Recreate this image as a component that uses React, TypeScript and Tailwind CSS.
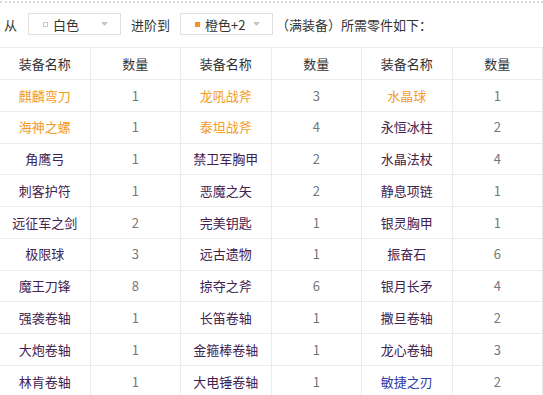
import React from "react";

type C = "d" | "o" | "b";
const rows: [string, C, number, string, C, number, string, C, number][] = [
  ["麒麟弯刀", "o", 1, "龙吼战斧", "o", 3, "水晶球", "o", 1],
  ["海神之螺", "o", 1, "泰坦战斧", "o", 4, "永恒冰柱", "d", 2],
  ["角鹰弓", "d", 1, "禁卫军胸甲", "d", 2, "水晶法杖", "d", 4],
  ["刺客护符", "d", 1, "恶魔之矢", "d", 2, "静息项链", "d", 1],
  ["远征军之剑", "d", 2, "完美钥匙", "d", 1, "银灵胸甲", "d", 1],
  ["极限球", "d", 3, "远古遗物", "d", 1, "振奋石", "d", 6],
  ["魔王刀锋", "d", 8, "掠夺之斧", "d", 6, "银月长矛", "d", 4],
  ["强袭卷轴", "d", 1, "长笛卷轴", "d", 1, "撒旦卷轴", "d", 2],
  ["大炮卷轴", "d", 1, "金箍棒卷轴", "d", 1, "龙心卷轴", "d", 3],
  ["林肯卷轴", "d", 1, "大电锤卷轴", "d", 1, "敏捷之刃", "b", 2],
];

const colorClass: Record<C, string> = {
  d: "text-[#41214f]",
  o: "text-[#f29b25]",
  b: "text-[#2c3aa6]",
};

function Caret() {
  return (
    <svg width="7" height="4" viewBox="0 0 7 4" className="block">
      <path d="M0 0 L7 0 L3.5 4 Z" fill="#c4c4c4" />
    </svg>
  );
}

function Select({ label, dot }: { label: string; dot: "white" | "orange" }) {
  return (
    <div className="flex h-[22px] w-[93px] items-center border border-[#dedede] bg-white pl-[14px] pr-[12px]">
      {dot === "white" ? (
        <span className="h-[5px] w-[5px] border border-[#c8c8c8] bg-white" />
      ) : (
        <span className="h-[5px] w-[5px] bg-[#f7931e]" />
      )}
      <span className="ml-[5px] flex-1 text-[13px] leading-none text-[#333]">{label}</span>
      <Caret />
    </div>
  );
}

export default function App() {
  const font = { fontFamily: '"Noto Sans CJK SC", "Noto Sans", sans-serif' };
  return (
    <div className="h-[395px] w-[543px] overflow-hidden bg-white" style={font}>
      <div className="mt-[1px] border-t-2 border-dotted border-[#dcdcdc]" />
      <div className="mt-[10px] flex h-[22px] items-center">
        <span className="ml-[4px] text-[13px] leading-none text-[#333]">从</span>
        <div className="ml-[11px]">
          <Select label="白色" dot="white" />
        </div>
        <span className="ml-[10px] text-[13px] leading-none text-[#333]">进阶到</span>
        <div className="ml-[10px]">
          <Select label="橙色+2" dot="orange" />
        </div>
        <span className="ml-[3px] text-[13px] leading-none text-[#333]">（满装备）所需零件如下：</span>
      </div>
      <div className="mt-[12px] grid grid-cols-6 border-t border-[#ebebeb] text-[13px]">
        {["装备名称", "数量", "装备名称", "数量", "装备名称", "数量"].map((h, i) => (
          <div
            key={i}
            className="flex h-[32px] items-center justify-center border-b border-r border-[#ebebeb] text-[#333]"
          >
            {h}
          </div>
        ))}
        {rows.map((r, ri) =>
          [0, 1, 2].map((g) => {
            const name = r[g * 3] as string;
            const c = r[g * 3 + 1] as C;
            const n = r[g * 3 + 2] as number;
            return (
              <React.Fragment key={ri + "-" + g}>
                <div
                  className={
                    "flex h-[31.78px] items-center justify-center border-b border-r border-[#ebebeb] " +
                    colorClass[c]
                  }
                >
                  {name}
                </div>
                <div className="flex h-[31.78px] items-center justify-center border-b border-r border-[#ebebeb] text-[#777]">
                  {n}
                </div>
              </React.Fragment>
            );
          })
        )}
      </div>
    </div>
  );
}
